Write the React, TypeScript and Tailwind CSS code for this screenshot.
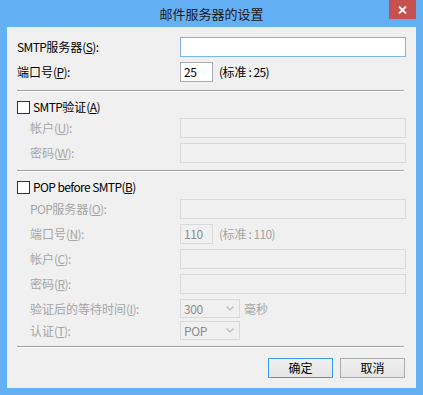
import React from "react";

const FONT = "font-['Noto_Sans_CJK_SC','Noto_Sans',sans-serif]";

// Latin runs look narrower than the CJK glyphs in the original, so they are tightened.
function T({ s }: { s: string }) {
  const parts = s.split(/([\x20-\x7E]+)/).filter(Boolean);
  return (
    <>
      {parts.map((p, i) =>
        /^[\x20-\x7E]+$/.test(p) ? (
          <span key={i} className="tracking-[-0.6px]">
            {p}
          </span>
        ) : (
          <span key={i}>{p}</span>
        )
      )}
    </>
  );
}

function Key({ k }: { k: string }) {
  return <span className="underline underline-offset-1 tracking-[-0.6px]">{k}</span>;
}

function Label({
  text,
  k,
  disabled = false,
  indent = false,
}: {
  text: string;
  k: string;
  disabled?: boolean;
  indent?: boolean;
}) {
  return (
    <div
      className={`w-[163px] shrink-0 text-[12px] leading-none ${
        indent ? "pl-[13px]" : ""
      } ${disabled ? "text-[#a5a5a5]" : "text-black"}`}
    >
      <T s={text + "("} />
      <Key k={k} />
      <T s="):" />
    </div>
  );
}

function Box({
  value,
  width,
  disabled = false,
  focused = false,
}: {
  value?: string;
  width?: string;
  disabled?: boolean;
  focused?: boolean;
}) {
  const border = focused
    ? "border-[#7eb4ea] bg-white"
    : disabled
    ? "border-[#d9d9d9] bg-[#f0f0f0]"
    : "border-[#abadb3] bg-white";
  return (
    <div
      className={`h-[20px] border ${border} ${
        width ?? "flex-1"
      } flex items-center px-[3px] text-[12px] leading-none tracking-[-0.4px] ${
        disabled ? "text-[#8c8c8c]" : "text-black"
      }`}
    >
      {value}
    </div>
  );
}

function Select({ value }: { value: string }) {
  return (
    <div className="h-[19px] w-[60px] border border-[#d9d9d9] bg-[#f0f0f0] flex items-center justify-between pl-[3px] pr-[5px] text-[12px] leading-none tracking-[-0.4px] text-[#8c8c8c]">
      <span>{value}</span>
      <svg width="8" height="5" viewBox="0 0 8 5">
        <path d="M0.5 0.5 L4 4 L7.5 0.5" fill="none" stroke="#b8b8b8" strokeWidth="1.2" />
      </svg>
    </div>
  );
}

function Separator({ className = "" }: { className?: string }) {
  return (
    <div className={`h-[2px] mr-[2px] border-t border-[#a0a0a0] border-b border-b-white ${className}`} />
  );
}

function Check({ text, k }: { text: string; k: string }) {
  return (
    <div className="h-[20px] flex items-center gap-[3px] text-[12px] leading-none text-black">
      <div className="w-[13px] h-[13px] border border-[#333333] bg-white" />
      <span>
        <T s={text + "("} />
        <Key k={k} />
        <T s=")" />
      </span>
    </div>
  );
}

function Button({ label, primary = false }: { label: string; primary?: boolean }) {
  return (
    <div
      className={`w-[65px] h-[20px] flex items-center justify-center border text-[12px] leading-none text-black bg-gradient-to-b from-[#f0f0f0] to-[#e5e5e5] ${
        primary ? "border-[#3c99e8]" : "border-[#acacac]"
      }`}
    >
      {label}
    </div>
  );
}

export default function App() {
  return (
    <div className={`w-[423px] h-[395px] bg-[#64b0f4] flex flex-col ${FONT}`}>
      {/* Title bar */}
      <div className="relative h-[27px] shrink-0 flex items-center justify-center">
        <span className="text-[13px] leading-none text-[#1a1a1a] -mt-[1px]">邮件服务器的设置</span>
        <div className="absolute right-[7px] top-0 w-[27px] h-[19px] bg-[#c75050] flex items-center justify-center">
          <svg width="9" height="8" viewBox="0 0 9 8">
            <path d="M1 0.5 L8 7.5 M8 0.5 L1 7.5" stroke="white" strokeWidth="1.8" />
          </svg>
        </div>
      </div>

      {/* Client area */}
      <div className="mx-[7px] h-[361px] bg-[#f0f0f0] flex flex-col pt-[10px] px-[10px]">
        <div className="flex items-center">
          <Label text="SMTP服务器" k="S" />
          <Box focused />
        </div>
        <div className="flex items-center mt-[5px]">
          <Label text="端口号" k="P" />
          <Box value="25" width="w-[33px]" />
          <span className="ml-[6px] text-[12px] leading-none text-black">
            <T s="(标准 : 25)" />
          </span>
        </div>

        <Separator className="mt-[8px]" />

        <div className="mt-[5px]">
          <Check text="SMTP验证" k="A" />
        </div>
        <div className="flex items-center mt-[1px]">
          <Label text="帐户" k="U" disabled indent />
          <Box disabled />
        </div>
        <div className="flex items-center mt-[5px]">
          <Label text="密码" k="W" disabled indent />
          <Box disabled />
        </div>

        <Separator className="mt-[7px]" />

        <div className="mt-[5px]">
          <Check text="POP before SMTP" k="B" />
        </div>
        <div className="flex items-center mt-[2px]">
          <Label text="POP服务器" k="O" disabled indent />
          <Box disabled />
        </div>
        <div className="flex items-center mt-[5px]">
          <Label text="端口号" k="N" disabled indent />
          <Box value="110" width="w-[33px]" disabled />
          <span className="ml-[6px] text-[12px] leading-none text-[#a5a5a5]">
            <T s="(标准 : 110)" />
          </span>
        </div>
        <div className="flex items-center mt-[5px]">
          <Label text="帐户" k="C" disabled indent />
          <Box disabled />
        </div>
        <div className="flex items-center mt-[5px]">
          <Label text="密码" k="R" disabled indent />
          <Box disabled />
        </div>
        <div className="flex items-center mt-[5px]">
          <Label text="验证后的等待时间" k="I" disabled indent />
          <Select value="300" />
          <span className="ml-[4px] text-[12px] leading-none text-[#a5a5a5]">毫秒</span>
        </div>
        <div className="flex items-center mt-[3px]">
          <Label text="认证" k="T" disabled indent />
          <Select value="POP" />
        </div>

        <Separator className="mt-[6px]" />

        <div className="flex justify-end gap-[7px] mt-[10px] mr-[1px]">
          <Button label="确定" primary />
          <Button label="取消" />
        </div>
      </div>
    </div>
  );
}
